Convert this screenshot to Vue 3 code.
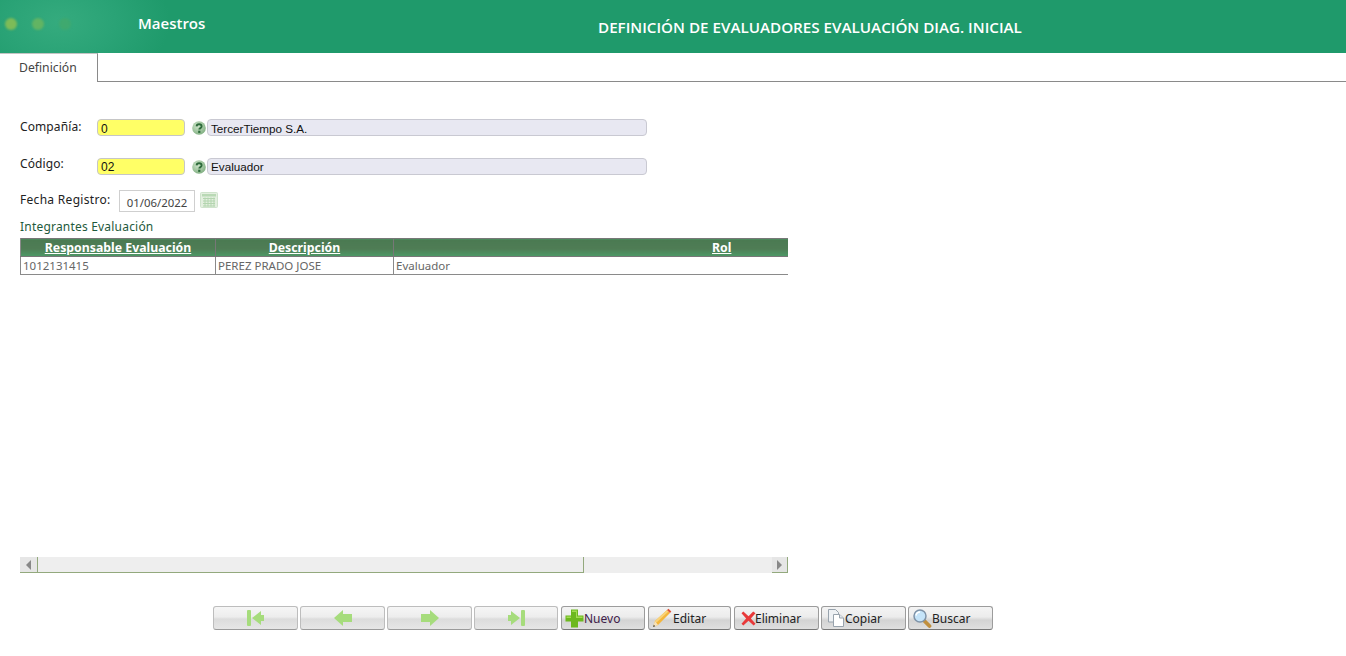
<script setup>
const columns = [
  { label: 'Responsable Evaluación', width: 195 },
  { label: 'Descripción', width: 178 },
  { label: 'Rol', width: 656 },
]
const row = ['1012131415', 'PEREZ PRADO JOSE', 'Evaluador']
</script>

<template>
  <div class="page">
    <header class="header">
      <div class="dots"><i class="dot d1"></i><i class="dot d2"></i><i class="dot d3"></i></div>
      <div class="module">Maestros</div>
      <h1 class="title">DEFINICIÓN DE EVALUADORES EVALUACIÓN DIAG. INICIAL</h1>
    </header>

    <nav class="tabs"><div class="tab">Definición</div></nav>

    <main class="form">
      <div class="row r1">
        <label class="lab lab-wide">Compañía:</label>
        <div class="key">0</div>
        <svg class="help" viewBox="0 0 14 14"><defs><radialGradient id="hg" cx=".4" cy=".35" r=".7"><stop offset="0" stop-color="#cfe6cb"/><stop offset="1" stop-color="#7fae80"/></radialGradient></defs><circle cx="7" cy="7" r="6.800" fill="url(#hg)"/><path d="M4.600 5.400c.1-2.900 5-2.900 5 0 0 1.800-2.300 1.600-2.300 3.200" fill="none" stroke="#2c6a3a" stroke-width="1.900"/><rect x="6.200" y="9.700" width="2.200" height="2.200" fill="#2c6a3a"/></svg>
        <div class="desc">TercerTiempo S.A.</div>
      </div>
      <div class="row r2">
        <label class="lab lab-wide up">Código:</label>
        <div class="key">02</div>
        <svg class="help" viewBox="0 0 14 14"><circle cx="7" cy="7" r="6.800" fill="url(#hg)"/><path d="M4.600 5.400c.1-2.900 5-2.900 5 0 0 1.800-2.300 1.600-2.300 3.200" fill="none" stroke="#2c6a3a" stroke-width="1.900"/><rect x="6.200" y="9.700" width="2.200" height="2.200" fill="#2c6a3a"/></svg>
        <div class="desc">Evaluador</div>
      </div>
      <div class="row r3">
        <label class="lab lab-date">Fecha Registro:</label>
        <div class="date">01/06/2022</div>
        <svg class="cal" viewBox="0 0 18 16">
          <rect x=".5" y=".5" width="17" height="15" rx="1" fill="#e3efdf" stroke="#cfe3cc"/>
          <rect x="2" y="2" width="14" height="2.500" fill="#b9d9b5"/>
          <path d="M3 6.500h12M3 9h12M3 11.500h12M3 14h12M5 5.500v9M8 5.500v9M11 5.500v9M14 5.500v9" stroke="#b3d5af" stroke-width="1" fill="none"/>
        </svg>
      </div>

      <div class="section">Integrantes Evaluación</div>

      <div class="grid-clip">
        <table class="grid">
          <colgroup><col v-for="c in columns" :key="c.label" :style="{ width: c.width + 'px' }" /></colgroup>
          <thead><tr><th v-for="c in columns" :key="c.label"><span>{{ c.label }}</span></th></tr></thead>
          <tbody><tr><td v-for="v in row" :key="v">{{ v }}</td></tr></tbody>
        </table>
      </div>

      <div class="scroll">
        <div class="sbtn"><i class="tri left"></i></div>
        <div class="thumb"></div>
        <div class="track"></div>
        <div class="sbtn right-btn"><i class="tri right"></i></div>
      </div>

      <div class="toolbar">
        <button class="btn w85 off center"><svg class="nav" viewBox="0 0 18 18"><rect x="0" y="1" width="4" height="16" rx="1" fill="#a6dc7c"/><path d="M5 9l9-7v4h3v6h-3v4z" fill="#a6dc7c"/></svg></button>
        <button class="btn w85 off center"><svg class="nav" viewBox="0 0 18 18"><path d="M0 9l9-8v4h9v8H9v4z" fill="#a6dc7c"/></svg></button>
        <button class="btn w85 off center"><svg class="nav" viewBox="0 0 18 18"><path d="M18 9L9 1v4H0v8h9v4z" fill="#a6dc7c"/></svg></button>
        <button class="btn w84 off center"><svg class="nav" viewBox="0 0 18 18"><rect x="14" y="1" width="4" height="16" rx="1" fill="#a6dc7c"/><path d="M13 9L4 2v4H1v6h3v4z" fill="#a6dc7c"/></svg></button>
        <button class="btn w84 act m1 p-nuevo">
          <svg class="ic19" viewBox="0 0 19 19"><path d="M6 .500h7v6h5.500v6H13v6H6v-6H.500v-6H6z" fill="#6cb81e"/><path d="M7 1.500h5v6h5.500v1.500H11V3H7zM1.500 7.500H6V9H1.500z" fill="#a2dd52"/></svg><span class="plum">Nuevo</span>
        </button>
        <button class="btn w83 act m1 p-editar">
          <svg class="ic20" viewBox="0 0 20 20"><path d="M1 19l2-6L15 2l3 3L6 17z" fill="#f4b63c"/><path d="M3 13L15 2l1.500 1.500L4.500 14.500z" fill="#f9d37a"/><path d="M15 2l1.500-1.300 2.800 2.800L18 5z" fill="#e0533a"/><path d="M1 19l2-6 3 4z" fill="#f6e2bb"/><path d="M1 19l.8-2.300 1.500 1.500z" fill="#444"/></svg><span>Editar</span>
        </button>
        <button class="btn w85 act m1 p-elim">
          <svg class="ic-x" viewBox="0 0 16 16"><path d="M.500 2.500L2.500.500 8 5.500l5-5 2.500 2L10.500 8l5 5.500-2 2L8 10.500l-5.500 5-2-2L5.500 8z" fill="#e8393a"/></svg><span class="tight">Eliminar</span>
        </button>
        <button class="btn w85 act p-copiar">
          <svg class="ic-c" viewBox="0 0 16 18"><path d="M.500 .500h7l3 3V13H.500z" fill="#eef1f4" stroke="#98a3ad"/><path d="M5.500 5.500h6l4 3.500v8.500H5.500z" fill="#fff" stroke="#98a3ad"/><path d="M11.500 5.500V9h4" fill="#e4e8ec" stroke="#98a3ad"/></svg><span>Copiar</span>
        </button>
        <button class="btn w85 act p-buscar">
          <svg class="ic19" viewBox="0 0 19 19"><path d="M11 11.500l5.500 5.500" stroke="#c08f3e" stroke-width="3.800" stroke-linecap="round"/><circle cx="7" cy="7" r="6" fill="#c5e4f9" stroke="#7f93a8" stroke-width="1.500"/><path d="M3 6.500c.5-2.200 2.200-3.400 4-3.400" stroke="#fff" stroke-width="1.500" fill="none"/></svg><span class="flush">Buscar</span>
        </button>
      </div>
    </main>
  </div>
</template>

<style>
html, body { margin: 0; background: #fff; overflow: hidden; }
</style>

<style scoped>
.page { width: 1346px; height: 656px; font-family: "Noto Sans", "Open Sans", sans-serif; color: #222; overflow: hidden; }
.header {
  height: 53px; display: flex; align-items: center;
  background: radial-gradient(ellipse 110px 70px at 60px 22px, #35ab7e 0%, #2aa376 50%, rgba(31,154,107,0) 100%), #1f9a6b;
  color: #fff;
}
.dots { display: flex; gap: 15px; margin-left: 5px; width: 133px; padding-bottom: 5px; box-sizing: border-box; }
.dot { width: 12px; height: 12px; border-radius: 50%; display: block; filter: blur(.8px); }
.d1 { background: #7dbb58; }
.d2 { background: #62b463; }
.d3 { background: #3fa96f; }
.module { font-family: "Open Sans", sans-serif; font-size: 15px; font-weight: 600; width: 460px; padding-bottom: 8px; }
.title { margin: 0; font-family: "Open Sans", sans-serif; font-size: 15.200px; font-weight: 600; white-space: nowrap; padding-top: 1px; }

.tabs { height: 28px; border-bottom: 1px solid #8a8a8a; }
.tab {
  width: 98px; height: 29px; box-sizing: border-box; border-right: 1px solid #8a8a8a; border-top: 1px solid #c4c4c4;
  background: #fff; font-size: 12.200px; padding-left: 19px; line-height: 27px; color: #444; position: relative;
}

.form { padding-left: 20px; width: 768px; }
.row { display: flex; align-items: center; }
.r1 { margin-top: 37px; height: 17px; }
.r2 { margin-top: 22px; height: 17px; }
.r3 { margin-top: 15px; height: 22px; }
.lab { font-size: 12px; color: #222; letter-spacing: .1px; }
.lab-wide { width: 77px; margin-top: -2px; }
.up { margin-top: -7px; }
.lab-date { width: 99px; margin-top: -4px; letter-spacing: .3px; }
.key {
  width: 88px; height: 17px; box-sizing: border-box; background: #ffff66; border: 1px solid #c6c6c6; border-radius: 4px;
  font: 12px/18px "Liberation Sans", sans-serif; padding-left: 3px; color: #111;
}
.help { width: 14px; height: 14px; margin-left: 7px; margin-right: 1px; }
.desc {
  width: 440px; height: 17px; box-sizing: border-box; background: #e8e8f2; border: 1px solid #c9c9d2; border-radius: 4px;
  font: 11.700px/18px "Liberation Sans", sans-serif; padding-left: 3px; color: #111;
}
.r2 .key, .r2 .desc { line-height: 16px; }
.date {
  width: 76px; height: 22px; box-sizing: border-box; border: 1px solid #cfcfcf; background: #fff;
  font-size: 11.400px; line-height: 23px; text-align: center; color: #444;
}
.cal { width: 18px; height: 16px; margin-left: 5px; margin-top: -2px; }
.section { font-size: 12px; color: #1e5a3c; margin-top: 7px; height: 15px; line-height: 16px; letter-spacing: .2px; }

.grid-clip { width: 768px; overflow: hidden; margin-top: 4px; }
.grid { width: 1029px; border-collapse: collapse; table-layout: fixed; border-bottom: 1px solid #8a8a8a; border-top: 1px solid #777; }
.grid th {
  height: 17px; padding: 0; font: bold 12.300px "Noto Sans", sans-serif; color: #fff; text-align: center;
  background: linear-gradient(#4a7a52 0%, #4f7c55 55%, #4c9a66 100%); border-bottom: 1px solid #777; border-right: 1px solid #777;
}
.grid th span { text-decoration: underline; display: block; line-height: 16px; }
.grid th:first-child, .grid td:first-child { border-left: 1px solid #8a8a8a; }
.grid th:last-child, .grid td:last-child { border-right: 0; }
.grid td { height: 17px; padding: 0 0 0 2px; font-size: 11.500px; line-height: 17px; color: #666; border-right: 1px solid #8a8a8a; white-space: nowrap; overflow: hidden; }

.scroll { display: flex; height: 16px; margin-top: 282px; background: #eee; width: 768px; }
.sbtn { width: 17px; height: 16px; background: #e6e6e6; display: flex; align-items: center; justify-content: center; flex: none; border-bottom: 1px solid #93a97d; box-sizing: border-box; }
.right-btn { border-right: 1px solid #93a97d; width: 16px; }
.thumb { width: 547px; border-left: 1px solid #93a97d; border-right: 1px solid #93a97d; border-bottom: 1px solid #93a97d; background: #eee; box-sizing: border-box; }
.track { flex: 1; }
.tri { width: 0; height: 0; border-top: 5px solid transparent; border-bottom: 5px solid transparent; display: block; }
.tri.left { border-right: 5px solid #888; }
.tri.right { border-left: 5px solid #888; }

.toolbar { display: flex; gap: 2px; margin-top: 33px; margin-left: 193px; width: 790px; }
.btn {
  height: 24px; box-sizing: border-box; border: 1px solid #bdbdbd; border-bottom-color: #9a9a9a; border-radius: 3px; padding: 0;
  background: linear-gradient(#f6f6f6 0%, #ededed 45%, #dcdcdc 55%, #e6e6e6 100%);
  display: flex; align-items: center; font: 12px "Noto Sans", sans-serif; color: #222; flex: none;
}
.center { justify-content: center; }
.act { background: linear-gradient(#f4f4f4 0%, #ececec 45%, #d3d3d3 60%, #dfdfdf 100%); border-color: #9c9c9c; border-bottom-color: #777; }
.w85 { width: 85px; }
.w84 { width: 84px; }
.w83 { width: 83px; }
.m1 { margin-left: 1px; }
.nav { width: 18px; height: 18px; }
.ic19 { width: 19px; height: 19px; flex: none; }
.ic20 { width: 20px; height: 20px; flex: none; }
.ic-x { width: 15px; height: 15px; flex: none; }
.ic-c { width: 16px; height: 18px; flex: none; }
.p-nuevo { padding-left: 3px; }
.p-editar { padding-left: 3px; }
.p-elim { padding-left: 6px; }
.p-copiar { padding-left: 6px; }
.p-buscar { padding-left: 4px; }
.plum { color: #40204a; }
.btn span { margin-left: 1px; }
.btn .plum, .btn .flush { margin-left: 0; }
.btn .tight { margin-left: -1px; }
</style>
